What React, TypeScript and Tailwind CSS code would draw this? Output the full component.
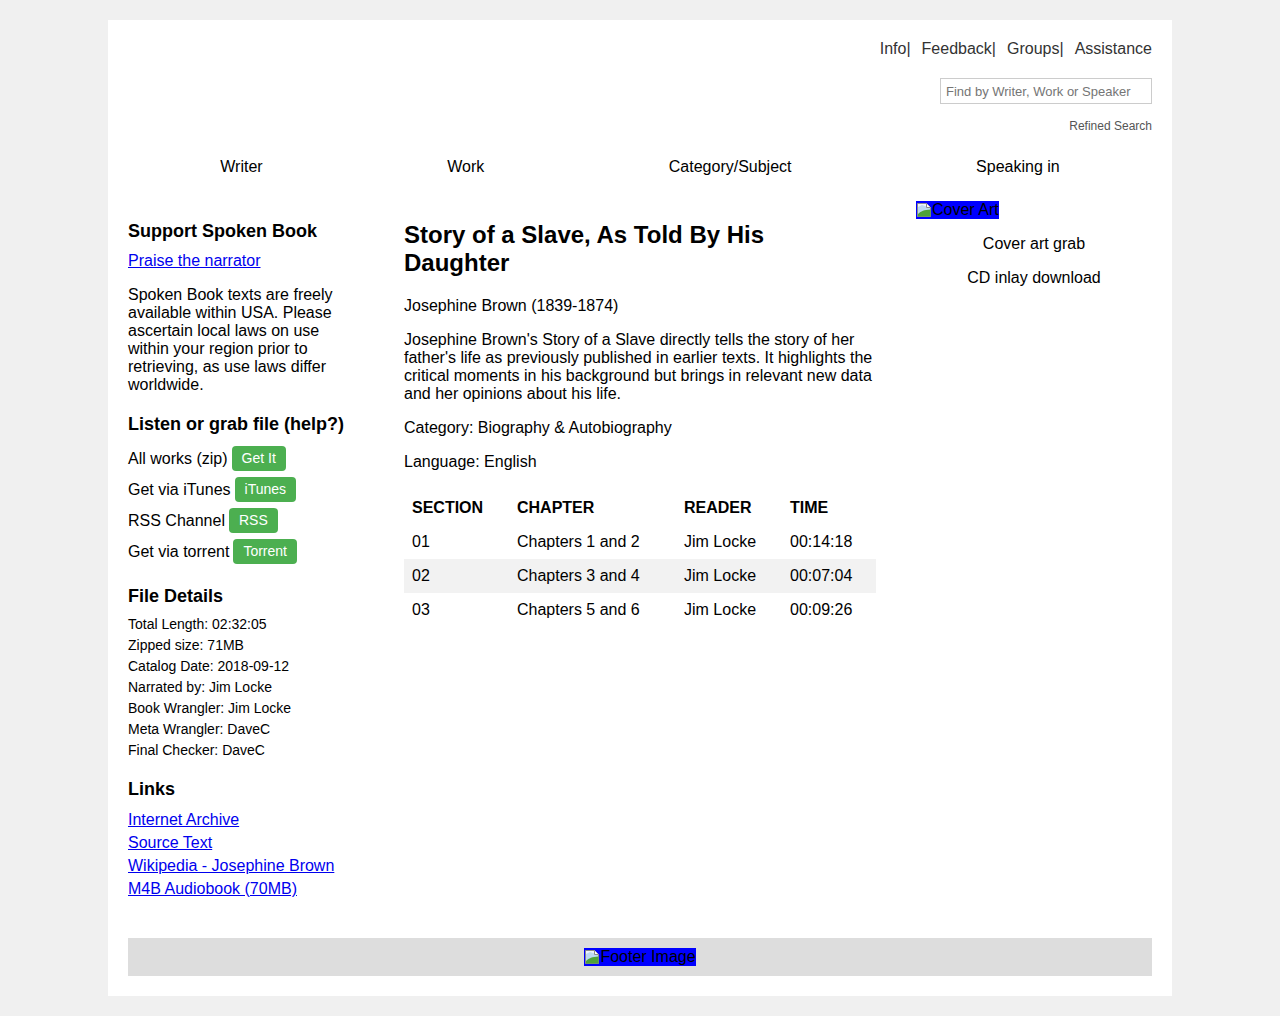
import React from 'react';

function BrokenImage() {
  return (
    <svg width="16" height="16" viewBox="0 0 16 16" className="shrink-0">
      <path d="M1.5 1.5h9l4 4v9h-13z" fill="#eef4fb" stroke="#8a8a8a" />
      <path d="M2 5l4-2 3 1 5 2v8H2z" fill="#bcd9f2" />
      <path d="M2 14.5V12c3-3 6-4 12.5-4.5v7z" fill="#4ea33a" />
      <path d="M10.5 1.5v4h4" fill="#fff" stroke="#8a8a8a" />
    </svg>
  );
}

function AltImage({ label }: { label: string }) {
  return (
    <span className="inline-flex items-center bg-[#0000ff] text-black text-[16px] leading-[18px]">
      <BrokenImage />
      {label}
    </span>
  );
}

const grabs = [
  { label: 'All works (zip)', button: 'Get It' },
  { label: 'Get via iTunes', button: 'iTunes' },
  { label: 'RSS Channel', button: 'RSS' },
  { label: 'Get via torrent', button: 'Torrent' },
];

const details = [
  'Total Length: 02:32:05',
  'Zipped size: 71MB',
  'Catalog Date: 2018-09-12',
  'Narrated by: Jim Locke',
  'Book Wrangler: Jim Locke',
  'Meta Wrangler: DaveC',
  'Final Checker: DaveC',
];

const links = ['Internet Archive', 'Source Text', 'Wikipedia - Josephine Brown', 'M4B Audiobook (70MB)'];

const sections = [
  { section: '01', chapter: 'Chapters 1 and 2', reader: 'Jim Locke', time: '00:14:18' },
  { section: '02', chapter: 'Chapters 3 and 4', reader: 'Jim Locke', time: '00:07:04' },
  { section: '03', chapter: 'Chapters 5 and 6', reader: 'Jim Locke', time: '00:09:26' },
];

export default function App() {
  return (
    <div className="min-h-[1016px] bg-[#f0f0f0] pt-5 pb-5 font-['Liberation_Sans',Arial,sans-serif] text-[16px] text-black">
      <div className="mx-auto w-[1064px] bg-white p-5">
        {/* Header */}
        <div className="flex flex-col items-end">
          <div className="flex gap-[11px] text-[#333] leading-[18px]">
            <span>Info|</span>
            <span>Feedback|</span>
            <span>Groups|</span>
            <span>Assistance</span>
          </div>
          <input
            type="text"
            placeholder="Find by Writer, Work or Speaker"
            className="mt-5 h-[26px] w-[212px] border border-[#ccc] px-[5px] text-[13px] text-[#333] placeholder:text-[#757575] outline-none"
          />
          <span className="mt-[15px] text-[12px] leading-[14px] text-[#555]">Refined Search</span>
        </div>

        {/* Nav */}
        <nav className="mt-[25px] flex justify-around leading-[18px]">
          <span>Writer</span>
          <span>Work</span>
          <span>Category/Subject</span>
          <span>Speaking in</span>
        </nav>

        <div className="mt-[24px] grid grid-cols-[236px_472px_236px] gap-10">
          {/* Left column */}
          <aside className="leading-[18px]">
            <h3 className="mt-[21px] text-[18px] font-bold leading-[21px]">Support Spoken Book</h3>
            <a href="#" className="mt-[10px] block text-[#0000ee] underline">Praise the narrator</a>
            <p className="mt-4">
              Spoken Book texts are freely available within USA. Please ascertain local laws on use within your region prior to retrieving, as use laws differ worldwide.
            </p>

            <h3 className="mt-5 text-[18px] font-bold leading-[21px]">Listen or grab file (help?)</h3>
            <div className="mt-[11px] flex flex-col gap-[6px]">
              {grabs.map((g) => (
                <div key={g.label} className="flex items-center gap-1">
                  <span>{g.label}</span>
                  <span className="rounded bg-[#4caf50] px-[10px] py-1 text-[14px] leading-[17px] text-white">{g.button}</span>
                </div>
              ))}
            </div>

            <h3 className="mt-[22px] text-[18px] font-bold leading-[21px]">File Details</h3>
            <ul className="mt-[7px] text-[14px] leading-[21px]">
              {details.map((d) => (
                <li key={d}>{d}</li>
              ))}
            </ul>

            <h3 className="mt-[18px] text-[18px] font-bold leading-[21px]">Links</h3>
            <ul className="mt-2 leading-[23px]">
              {links.map((l) => (
                <li key={l}>
                  <a href="#" className="text-[#0000ee] underline">{l}</a>
                </li>
              ))}
            </ul>
          </aside>

          {/* Center column */}
          <main className="leading-[18px]">
            <h1 className="mt-[21px] text-[24px] font-bold leading-[28px]">Story of a Slave, As Told By His Daughter</h1>
            <p className="mt-5">Josephine Brown (1839-1874)</p>
            <p className="mt-4">
              Josephine Brown's Story of a Slave directly tells the story of her father's life as previously published in earlier texts. It highlights the critical moments in his background but brings in relevant new data and her opinions about his life.
            </p>
            <p className="mt-4">Category: Biography &amp; Autobiography</p>
            <p className="mt-4">Language: English</p>

            <table className="mt-5 w-full table-fixed border-collapse text-left">
              <thead>
                <tr className="h-[34px]">
                  <th className="w-[105px] px-2 font-bold">SECTION</th>
                  <th className="w-[167px] px-2 font-bold">CHAPTER</th>
                  <th className="w-[106px] px-2 font-bold">READER</th>
                  <th className="px-2 font-bold">TIME</th>
                </tr>
              </thead>
              <tbody>
                {sections.map((s, i) => (
                  <tr key={s.section} className={`h-[34px] ${i === 1 ? 'bg-[#f2f2f2]' : ''}`}>
                    <td className="px-2">{s.section}</td>
                    <td className="px-2">{s.chapter}</td>
                    <td className="px-2">{s.reader}</td>
                    <td className="px-2">{s.time}</td>
                  </tr>
                ))}
              </tbody>
            </table>
          </main>

          {/* Right column */}
          <aside className="text-center leading-[18px]">
            <div className="mt-[1px] flex">
              <AltImage label="Cover Art" />
            </div>
            <p className="mt-4">Cover art grab</p>
            <p className="mt-4">CD inlay download</p>
          </aside>
        </div>

        {/* Footer */}
        <footer className="mt-[38px] flex justify-center bg-[#ddd] py-[10px]">
          <AltImage label="Footer Image" />
        </footer>
      </div>
    </div>
  );
}
